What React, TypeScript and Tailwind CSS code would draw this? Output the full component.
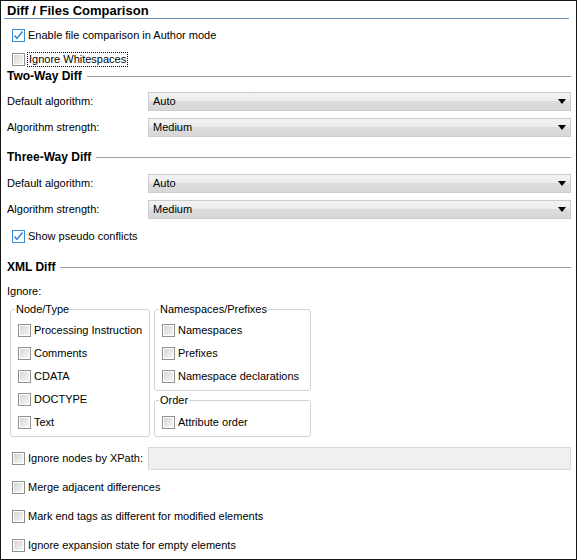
import React from 'react';

const font = { fontFamily: '"Liberation Sans", Arial, sans-serif' };

const Check: React.FC<{ checked?: boolean }> = ({ checked }) =>
  checked ? (
    <span className="w-[13px] h-[13px] shrink-0 border border-[#3b8ad8] bg-white flex items-center justify-center">
      <svg width="11" height="11" viewBox="0 0 11 11">
        <polyline points="1.5,5.5 4,8.5 9.5,1.5" fill="none" stroke="#2a7fd4" strokeWidth="1.4" />
      </svg>
    </span>
  ) : (
    <span className="w-[13px] h-[13px] shrink-0 border border-[#8e8f8f] bg-white p-[1px]">
      <span className="block w-full h-full bg-gradient-to-br from-[#d6d6d6] to-[#f6f6f6]" />
    </span>
  );

const CheckRow: React.FC<{ label: string; checked?: boolean; focus?: boolean; className?: string }> = ({
  label,
  checked,
  focus,
  className = '',
}) => (
  <div className={`flex items-center gap-[3px] ${className}`}>
    <Check checked={checked} />
    <span className={focus ? 'outline-1 outline-dotted outline-black px-[1px] leading-[13px]' : 'leading-[13px]'}>{label}</span>
  </div>
);

const Heading: React.FC<{ text: string; className?: string }> = ({ text, className = '' }) => (
  <div className={`flex items-center h-[14px] pl-[6px] pr-[5px] gap-[5px] ${className}`}>
    <span className="font-bold text-[12px] leading-[14px]">{text}</span>
    <div className="flex-1 h-px bg-[#a0a0a0]" />
  </div>
);

const Combo: React.FC<{ label: string; value: string; className?: string }> = ({ label, value, className = '' }) => (
  <div className={`flex items-center pl-[6px] pr-[5px] ${className}`}>
    <span className="w-[141px] shrink-0">{label}</span>
    <div className="flex-1 h-[19px] border border-[#cccccc] flex items-center pl-[4px] pr-[4px] bg-[linear-gradient(to_bottom,#f3f3f3_0%,#ececec_45%,#dcdcdc_50%,#d8d8d8_100%)]">
      <span className="flex-1">{value}</span>
      <svg width="8" height="5" viewBox="0 0 8 5">
        <polygon points="0,0 8,0 4,5" fill="#000" />
      </svg>
    </div>
  </div>
);

const Group: React.FC<{ title: string; className?: string; children: React.ReactNode }> = ({
  title,
  className = '',
  children,
}) => (
  <div className={`relative border border-[#d3d3d3] rounded-[3px] ${className}`}>
    <span className="absolute -top-[8px] left-[4px] bg-white px-[1px] leading-[14px]">{title}</span>
    {children}
  </div>
);

export default function App() {
  return (
    <div style={font} className="w-[577px] h-[560px] border border-[#151515] bg-white text-[11px] text-black flex flex-col">
      <div className="h-[17px] pl-[6px] font-bold text-[13px] leading-[19px]">Diff / Files Comparison</div>
      <div className="h-px ml-[3px] mr-[7px] bg-[#7396c0]" />

      <CheckRow label="Enable file comparison in Author mode" checked className="h-[22px] mt-[5px] pl-[11px]" />
      <CheckRow label="Ignore Whitespaces" focus className="h-[20px] mt-[3px] pl-[11px]" />

      <Heading text="Two-Way Diff" />
      <Combo label="Default algorithm:" value="Auto" className="mt-[9px]" />
      <Combo label="Algorithm strength:" value="Medium" className="mt-[7px]" />

      <Heading text="Three-Way Diff" className="mt-[13px]" />
      <Combo label="Default algorithm:" value="Auto" className="mt-[10px]" />
      <Combo label="Algorithm strength:" value="Medium" className="mt-[7px]" />
      <CheckRow label="Show pseudo conflicts" checked className="h-[20px] mt-[7px] pl-[11px]" />

      <Heading text="XML Diff" className="mt-[14px]" />
      <div className="h-[16px] mt-[9px] pl-[6px] leading-[16px]">Ignore:</div>

      <div className="flex gap-[4px] mt-[10px] pl-[9px]">
        <Group title="Node/Type" className="w-[140px] h-[128px] pt-[9px] pl-[7px]">
          <div className="flex flex-col">
            <CheckRow label="Processing Instruction" className="h-[23px]" />
            <CheckRow label="Comments" className="h-[23px]" />
            <CheckRow label="CDATA" className="h-[23px]" />
            <CheckRow label="DOCTYPE" className="h-[23px]" />
            <CheckRow label="Text" className="h-[23px]" />
          </div>
        </Group>
        <div className="flex flex-col gap-[9px]">
          <Group title="Namespaces/Prefixes" className="w-[157px] h-[82px] pt-[9px] pl-[7px]">
            <CheckRow label="Namespaces" className="h-[23px]" />
            <CheckRow label="Prefixes" className="h-[23px]" />
            <CheckRow label="Namespace declarations" className="h-[23px]" />
          </Group>
          <Group title="Order" className="w-[157px] h-[37px] pt-[10px] pl-[7px]">
            <CheckRow label="Attribute order" className="h-[23px]" />
          </Group>
        </div>
      </div>

      <div className="flex items-center mt-[10px] pl-[11px] pr-[5px] h-[23px]">
        <div className="w-[136px] shrink-0">
          <CheckRow label="Ignore nodes by XPath:" />
        </div>
        <div className="flex-1 h-[23px] bg-[#f0f0f0] border border-[#d9d9d9]" />
      </div>

      <CheckRow label="Merge adjacent differences" className="h-[20px] mt-[7px] pl-[11px]" />
      <CheckRow label="Mark end tags as different for modified elements" className="h-[20px] mt-[9px] pl-[11px]" />
      <CheckRow label="Ignore expansion state for empty elements" className="h-[20px] mt-[9px] pl-[11px]" />
    </div>
  );
}
